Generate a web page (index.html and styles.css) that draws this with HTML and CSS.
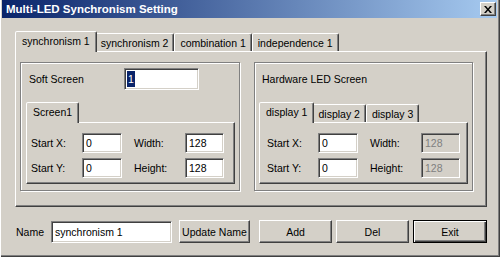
FILE: index.html
```html
<!DOCTYPE html>
<html lang="en">
<head>
  <meta charset="UTF-8">
  <title>Multi-LED Synchronism Setting</title>
  <link rel="stylesheet" href="styles.css">
</head>
<body>
  <div class="window">
    <!-- title bar -->
    <div class="titlebar">
      <span class="title">Multi-LED Synchronism Setting</span>
      <span class="close">
        <svg width="8" height="7" viewBox="0 0 8 7"><path d="M0 0h2l2 2.5 2-2.5h2l-3 3.5 3 3.5h-2l-2-2.5-2 2.5h-2l3-3.5z" fill="#000"/></svg>
      </span>
    </div>

    <div class="client">
      <!-- main tabs -->
      <div class="tab-row main-tabs">
        <div class="tab active">synchronism 1</div>
        <div class="tab">synchronism 2</div>
        <div class="tab">combination 1</div>
        <div class="tab">independence 1</div>
      </div>
      <div class="page main-page">
        <div class="group group-soft">
          <div class="top-row">
            <span class="top-label">Soft Screen</span>
            <div class="field soft-field"><span class="sel">1</span></div>
          </div>
          <div class="sub-tabs">
            <div class="tab-row">
              <div class="tab active">Screen1</div>
            </div>
            <div class="page sub-page">
              <div class="grid">
                <span class="label">Start X:</span>
                <div class="field w40">0</div>
                <span class="label">Width:</span>
                <div class="field w39">128</div>
                <span class="label">Start Y:</span>
                <div class="field w40">0</div>
                <span class="label">Height:</span>
                <div class="field w39">128</div>
              </div>
            </div>
          </div>
        </div>

        <div class="group group-hard">
          <div class="top-row">
            <span class="top-label">Hardware LED Screen</span>
          </div>
          <div class="sub-tabs">
            <div class="tab-row">
              <div class="tab active">display 1</div>
              <div class="tab">display 2</div>
              <div class="tab">display 3</div>
            </div>
            <div class="page sub-page hard-page">
              <div class="grid">
                <span class="label">Start X:</span>
                <div class="field w40">0</div>
                <span class="label">Width:</span>
                <div class="field w39 disabled">128</div>
                <span class="label">Start Y:</span>
                <div class="field w40">0</div>
                <span class="label">Height:</span>
                <div class="field w39 disabled">128</div>
              </div>
            </div>
          </div>
        </div>
      </div>

      <!-- bottom row -->
      <div class="footer">
        <span class="name-label">Name</span>
        <div class="field name-field">synchronism 1</div>
        <button class="btn btn-update">Update Name</button>
        <button class="btn btn-add">Add</button>
        <button class="btn btn-del">Del</button>
        <button class="btn btn-exit">Exit</button>
      </div>
    </div>
  </div>
</body>
</html>
```

FILE: styles.css
```css
body {
  margin: 0;
  background-color: #d4d0c8;
  font-family: "Liberation Sans", Arial, sans-serif;
  font-size: 10.5px;
  color: #000;
}

.window {
  width: 500px;
  height: 257px;
  box-sizing: border-box;
  display: flex;
  flex-direction: column;
  padding: 0 3px 3px 2px;
  box-shadow: inset 1px 0 #fff, inset -1px -1px #404040, inset -2px -2px #808080;
  overflow: hidden;
}

.titlebar {
  height: 18px;
  display: flex;
  align-items: center;
  justify-content: space-between;
  padding: 0 1px 0 4px;
  background: linear-gradient(to right, #0a246a, #a6caf0);
  color: #fff;
  font-weight: bold;
  font-size: 11.5px;
}

.close {
  width: 16px;
  height: 14px;
  box-sizing: border-box;
  display: flex;
  align-items: center;
  justify-content: center;
  background-color: #d4d0c8;
  border: 1px solid;
  border-color: #fff #404040 #404040 #fff;
  box-shadow: inset -1px -1px #808080;
}

.client {
  flex: 1;
  display: flex;
  flex-direction: column;
  padding: 13px 10px 0 13px;
}

/* tabs */
.tab-row {
  display: flex;
  align-items: flex-end;
  height: 20px;
  padding-left: 2px;
}

.tab {
  height: 18px;
  box-sizing: border-box;
  display: flex;
  align-items: center;
  padding: 0 5px;
  white-space: nowrap;
  background-color: #d4d0c8;
  border: 1px solid;
  border-bottom: none;
  border-color: #fff #404040 transparent #fff;
  border-radius: 2px 2px 0 0;
  box-shadow: inset -1px 0 #808080;
}

.tab.active {
  height: 21px;
  margin: 0 -2px -1px;
  padding: 0 6px 2px;
  position: relative;
  z-index: 1;
}

.page {
  box-sizing: border-box;
  border: 1px solid;
  border-color: #fff #404040 #404040 #fff;
  box-shadow: inset -1px -1px #808080;
}

.main-page {
  height: 156px;
  display: flex;
  gap: 14px;
  padding: 10px 0 0 4px;
}

.group {
  height: 129px;
  box-sizing: border-box;
  border: 1px solid #808080;
  box-shadow: inset 1px 1px #fff, 1px 1px #fff;
}

.group-soft {
  width: 220px;
  padding: 5px 0 0 5px;
}

.group-hard {
  width: 219px;
  padding: 5px 0 0 4px;
}

.top-row {
  display: flex;
  align-items: center;
  height: 22px;
  padding-left: 3px;
}

.group-soft .top-label {
  width: 95px;
}

.sub-tabs {
  width: 209px;
  margin-top: 12px;
}

.sub-page {
  height: 62px;
  padding: 10px 0 0 4px;
}

.hard-page {
  padding-left: 7px;
}

.grid {
  display: grid;
  grid-template-columns: 51px 52px 51px 39px;
  grid-template-rows: 20px 20px;
  row-gap: 5px;
  align-items: center;
}

/* edit fields */
.field {
  box-sizing: border-box;
  height: 20px;
  display: flex;
  align-items: center;
  padding-left: 3px;
  background-color: #fff;
  border: 1px solid;
  border-color: #808080 #fff #fff #808080;
  box-shadow: inset 1px 1px #404040, inset -1px -1px #d4d0c8;
  white-space: nowrap;
}

.field.disabled {
  background-color: #d4d0c8;
  color: #808080;
}

.w40 { width: 40px; }
.w39 { width: 39px; }

.soft-field {
  width: 75px;
  height: 22px;
  padding-left: 2px;
}

.sel {
  background-color: #0a246a;
  color: #fff;
  line-height: 16px;
  padding: 0 1px;
}

/* bottom row */
.footer {
  display: flex;
  align-items: center;
  height: 23px;
  margin-top: 13px;
  padding-left: 1px;
}

.name-label {
  width: 35px;
}

.name-field {
  width: 121px;
  height: 22px;
}

.btn {
  box-sizing: border-box;
  height: 23px;
  padding: 0;
  font-family: inherit;
  font-size: inherit;
  color: #000;
  background-color: #d4d0c8;
  border: 1px solid;
  border-color: #fff #404040 #404040 #fff;
  box-shadow: inset -1px -1px #808080;
}

.btn-update { width: 71px; margin-left: 7px; }
.btn-add { width: 73px; margin-left: 9px; }
.btn-del { width: 73px; margin-left: 4px; }

.btn-exit {
  width: 74px;
  margin-left: 4px;
  border-color: #000;
  box-shadow: inset 1px 1px #fff, inset -1px -1px #404040, inset -2px -2px #808080;
}
```
